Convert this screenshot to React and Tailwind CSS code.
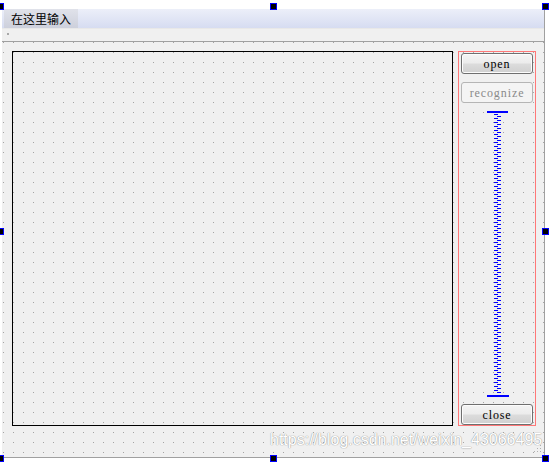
import React from 'react'

const handle = 'absolute h-[7px] w-[7px] border border-[#0000ff] bg-black'

function QtButton({ children, disabled }) {
  return (
    <div
      className={
        disabled
          ? 'flex h-[21px] w-[72px] items-center justify-center rounded-[3px] border border-[#b5b5b5] bg-[#f4f4f4] text-[#8a8a8a]'
          : 'flex h-[21px] w-[72px] items-center justify-center rounded-[3px] border border-[#6f6f6f] bg-[linear-gradient(#f4f4f4_0%,#ececec_48%,#dcdcdc_52%,#d0d0d0_100%)] text-black shadow-[inset_0_0_0_1px_#fcfcfc]'
      }
    >
      <span className="font-['Liberation_Serif',serif] text-[12px] leading-none tracking-[0.9px]">
        {children}
      </span>
    </div>
  )
}

const rows = Array.from({ length: 140 }, (_, i) => i)

function Slider() {
  return (
    <svg width="22" height="286" viewBox="0 0 22 286" className="block" shapeRendering="crispEdges">
      {rows.map((i) => (
        <rect
          key={i}
          x={i % 2 === 0 ? 7 : 10}
          y={3 + i * 2}
          width="4"
          height="1"
          fill="#0000ff"
        />
      ))}
      <rect x="0" y="0" width="21" height="2" fill="#0000ff" />
      <rect x="0" y="284" width="22" height="2" fill="#0000ff" />
    </svg>
  )
}

export default function App() {
  return (
    <div className="relative h-[462px] w-[549px] overflow-hidden bg-white font-['Liberation_Sans',sans-serif]">
      <div className="ml-[2px] mt-[9px] flex h-[449px] w-[543px] flex-col border-b border-r border-[#a0a0a0]">
        {/* menu bar */}
        <div className="flex h-[19px] bg-[linear-gradient(#eceff9,#d6dcf1)]">
          <div className="ml-[2px] flex w-[74px] items-center bg-[linear-gradient(#e0e2ea,#cdd0dc)] pl-[7px]">
            <span className="font-['Noto_Sans_CJK_SC',sans-serif] text-[12px] leading-none text-black">
              在这里输入
            </span>
          </div>
        </div>
        {/* tool bar */}
        <div className="relative h-[13px] border-t border-[#e8e8e8] bg-[#f0f0f0]">
          <div className="absolute left-[5px] top-[4px] h-[2px] w-[2px] bg-[#a8a8a8]" />
        </div>
        {/* central widget */}
        <div className="relative flex flex-1 border-t border-[#a0a0a0] bg-[#f0f0f0] bg-[conic-gradient(at_1px_1px,transparent_75%,#a4a4a4_0)] bg-[length:10px_10px] bg-[position:1px_0px] pl-[10px] pt-[9px]">
          <div className="h-[375px] w-[441px] shrink-0 border border-black" />
          <div className="ml-[5px] flex h-[375px] w-[78px] shrink-0 flex-col items-center border border-[#ff7878] pt-[1px]">
            <QtButton>open</QtButton>
            <div className="mt-[8px]">
              <QtButton disabled>recognize</QtButton>
            </div>
            <div className="flex flex-1 items-center justify-center pl-[1px]">
              <Slider />
            </div>
            <QtButton>close</QtButton>
          </div>
          {/* size grip */}
          <div className="absolute bottom-[5px] right-[3px] h-[1px] w-[1px] bg-[#b0b0b0] shadow-[-3px_0_0_#b0b0b0,-6px_0_0_#b0b0b0,0_-3px_0_#b0b0b0,-3px_-3px_0_#b0b0b0,0_-6px_0_#b0b0b0]" />
        </div>
      </div>

      {/* watermark */}
      <div className="absolute left-[270px] top-[432px] whitespace-nowrap text-[16px] leading-none text-white [text-shadow:0_0_1px_#9a9a9a,0_0_1px_#9a9a9a]">
        https://blog.csdn.net/weixin_43066495
      </div>

      {/* selection handles */}
      <div className={`${handle} left-[-3px] top-[3px]`} />
      <div className={`${handle} left-[270px] top-[3px]`} />
      <div className={`${handle} left-[542px] top-[3px]`} />
      <div className={`${handle} left-[-3px] top-[228px]`} />
      <div className={`${handle} left-[542px] top-[228px]`} />
      <div className={`${handle} left-[-3px] top-[455px]`} />
      <div className={`${handle} left-[270px] top-[455px]`} />
      <div className={`${handle} left-[542px] top-[455px]`} />
    </div>
  )
}
